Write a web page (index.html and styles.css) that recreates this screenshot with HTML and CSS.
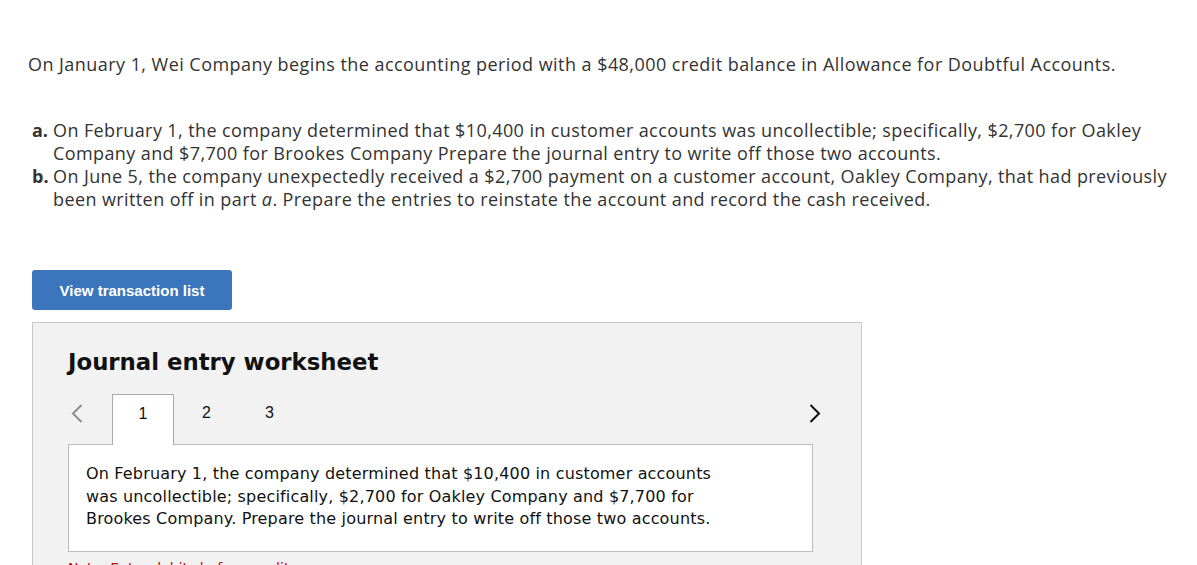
FILE: index.html
```html
<!DOCTYPE html>
<html>
<head>
<meta charset="utf-8">
<link rel="stylesheet" href="styles.css">
</head>
<body>
<div class="page">
  <p class="intro">On January 1, Wei Company begins the accounting period with a $48,000 credit balance in Allowance for Doubtful Accounts.</p>
  <ol class="parts">
    <li><span class="lbl">a.</span><span class="txt">On February 1, the company determined that $10,400 in customer accounts was uncollectible; specifically, $2,700 for Oakley Company and $7,700 for Brookes Company Prepare the journal entry to write off those two accounts.</span></li>
    <li><span class="lbl">b.</span><span class="txt">On June 5, the company unexpectedly received a $2,700 payment on a customer account, Oakley Company, that had previously been written off in part <i>a</i>. Prepare the entries to reinstate the account and record the cash received.</span></li>
  </ol>
  <button class="btn">View transaction list</button>
  <div class="panel">
    <h2 class="title">Journal entry worksheet</h2>
    <div class="tabs">
      <span class="chev left"><svg width="12" height="19" viewBox="0 0 12 19"><path d="M10.5 1 L2 9.5 L10.5 18" fill="none" stroke="#8c8c8c" stroke-width="2"/></svg></span>
      <span class="tab active">1</span>
      <span class="tab">2</span>
      <span class="tab">3</span>
      <span class="spacer"></span>
      <span class="chev right"><svg width="12" height="19" viewBox="0 0 12 19"><path d="M1.5 1 L10 9.5 L1.5 18" fill="none" stroke="#111" stroke-width="2"/></svg></span>
    </div>
    <div class="box">
      <p>On February 1, the company determined that $10,400 in customer accounts was uncollectible; specifically, $2,700 for Oakley Company and $7,700 for Brookes Company. Prepare the journal entry to write off those two accounts.</p>
    </div>
    <p class="note">Note: Enter debits before credits.</p>
  </div>
</div>
</body>
</html>
```
FILE: styles.css
```css
html, body { margin: 0; padding: 0; background: #fff; }
body { font-family: "Open Sans", "Liberation Sans", sans-serif; color: #333; }
.page { padding: 50px 0 0 28px; }
.intro { margin: 0; font-size: 18px; line-height: 28px; color: #333; letter-spacing: 0.45px; }
.parts { list-style: none; margin: 41px 0 0 4px; padding: 0; font-size: 18px; line-height: 23px; letter-spacing: 0.4px; }
.parts li { display: flex; }
.lbl { width: 21px; flex: none; font-weight: 700; letter-spacing: 0; }
.txt { width: 1132px; flex: none; }
.btn { margin: 59px 0 0 4px; display: block; width: 200px; height: 40px; background: #3b76bc; border: none; border-radius: 3px; color: #fff; font-family: "Liberation Sans", Arial, sans-serif; font-weight: 700; font-size: 15px; padding: 0; }
.panel { margin: 12px 0 0 4px; width: 830px; height: 300px; background: #f2f2f2; border: 1px solid #c8c8c8; padding: 0 0 0 35px; box-sizing: border-box; }
.title { margin: 24px 0 0 0; font-family: "DejaVu Sans", Verdana, sans-serif; font-weight: 700; font-size: 22.8px; color: #111; height: 30px; line-height: 30px; }
.tabs { display: flex; align-items: flex-start; margin-top: 17px; height: 50px; width: 753px; font-family: "Liberation Sans", Arial, sans-serif; font-size: 16px; line-height: 18px; color: #111; }
.chev { display: flex; padding-top: 10px; }
.chev.left { width: 44px; padding-left: 3px; box-sizing: border-box; }
.tab { width: 63px; height: 50px; box-sizing: border-box; display: flex; justify-content: center; padding-top: 10px; }
.tab.active { width: 62px; margin-right: 1px; background: #fff; border: 1px solid #a9a9a9; border-bottom: none; position: relative; z-index: 1; height: 51px; }
.spacer { flex: 1; }
.box { width: 745px; box-sizing: border-box; background: #fff; border: 1px solid #bcbcbc; padding: 18px 17px 20px; }
.box p { margin: 0; font-family: "DejaVu Sans", Verdana, sans-serif; font-size: 16px; letter-spacing: 0.17px; line-height: 22.5px; color: #111; width: 650px; }
.note { margin: 8px 0 0 0; font-family: "DejaVu Sans", Verdana, sans-serif; font-size: 14px; color: #c00; }
```
